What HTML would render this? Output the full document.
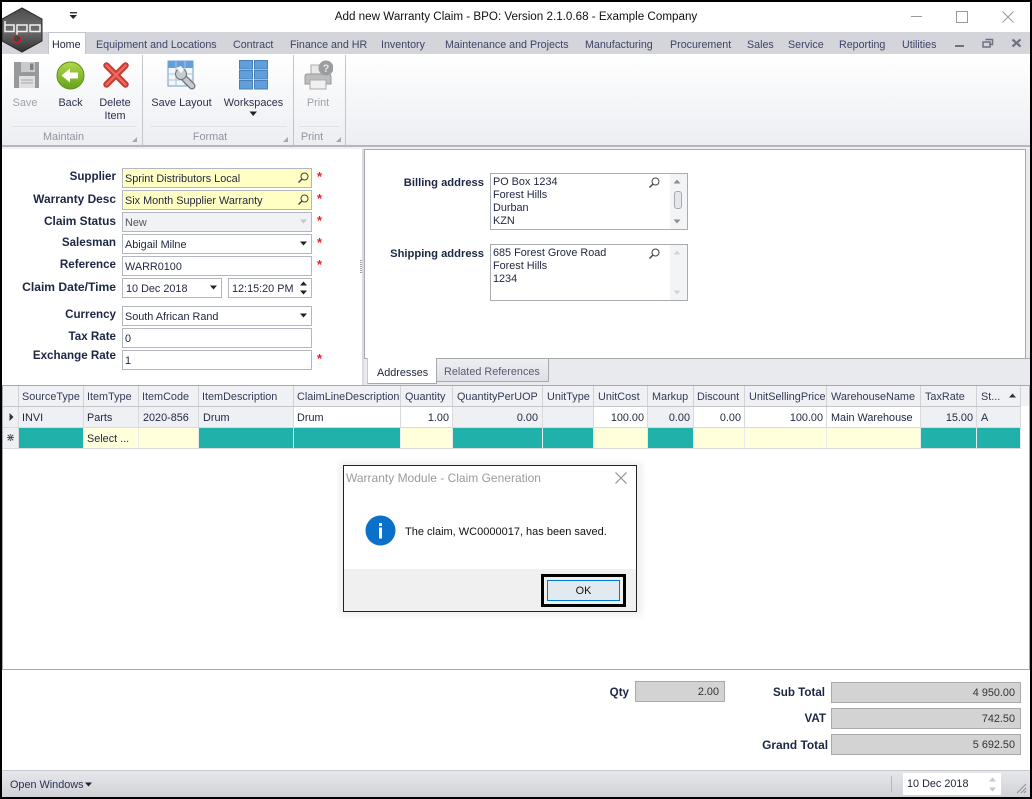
<!DOCTYPE html>
<html><head><meta charset="utf-8"><title>Add new Warranty Claim</title>
<style>
html,body{margin:0;padding:0;background:#fff}
#p{position:relative;width:1032px;height:799px;overflow:hidden;background:#fff;font:10.85px "Liberation Sans",sans-serif;color:#1f2540}
#p div,#p svg{position:absolute}
.t{white-space:nowrap}
.tab{top:38px;height:14px;line-height:14px;color:#3d4468;white-space:nowrap;font-size:10.7px}
.r{color:#2a2f4e;text-align:center;white-space:nowrap;line-height:13px}
.g{color:#9ba0ab}
.gl{color:#8f94a0;text-align:center;white-space:nowrap}
.lb{font-weight:bold;text-align:right;color:#1c2645;white-space:nowrap;font-size:11.6px;line-height:14px}
.f{background:#fff;border:1px solid #b4b7bf;box-sizing:border-box;height:20px;line-height:20px;padding-left:2px;white-space:nowrap;color:#1f2540}
.y{background:#ffffc4}
.s{color:#f01c25;font-weight:bold;font-size:13px;line-height:14px}
.h{top:386px;height:20px;line-height:22px;background:#f0f1f4;border-right:1px solid #d0d2d8;box-sizing:border-box;padding-left:3px;white-space:nowrap;color:#333a58;overflow:hidden}
.c{top:407px;height:20px;line-height:22px;border-right:1px solid #d8dade;box-sizing:border-box;padding:0 3px;white-space:nowrap;background:#eff0f3;color:#1f2540}
.w{background:#fff}
.n{top:428px;height:20px;line-height:22px;border-right:1px solid #e8eaec;box-sizing:border-box;padding:0 3px;white-space:nowrap;background:#20b2aa;color:#1f2540}
.ny{background:#ffffdc}
.ra{text-align:right}
.tot{background:#d3d3d3;border:1px solid #a9a9a9;box-sizing:border-box;height:21px;line-height:20px;text-align:right;padding-right:5px;color:#333}
</style></head><body>
<div id="p">
<!-- title bar -->
<div class="t" style="left:0;top:9px;width:1032px;text-align:center;font-size:11.65px;color:#111;line-height:16px">Add new Warranty Claim - BPO: Version 2.1.0.68 - Example Company</div>
<svg style="left:69px;top:12px" width="9" height="8"><rect x="1" y="0" width="7" height="1.4" fill="#333"/><path d="M0.5 3H8L4.2 7Z" fill="#222"/></svg>
<div style="left:911px;top:16px;width:11px;height:1px;background:#9a9a9a"></div>
<div style="left:956px;top:11px;width:10px;height:10px;border:1px solid #9a9a9a"></div>
<svg style="left:1002px;top:11px" width="12" height="12"><path d="M.5.5L11.5 11.5M11.5.5L.5 11.5" stroke="#9a9a9a" fill="none"/></svg>
<!-- tab strip -->
<div style="left:0;top:32px;width:1032px;height:22px;background:#d3d5db"></div>
<div style="left:48px;top:32px;width:38px;height:23px;background:#fff;border:1px solid #c2c5cc;border-bottom:0;box-sizing:border-box"></div>
<div class="tab" style="left:52px;color:#1f2540">Home</div>
<div class="tab" style="left:96px">Equipment and Locations</div>
<div class="tab" style="left:233px">Contract</div>
<div class="tab" style="left:290px">Finance and HR</div>
<div class="tab" style="left:381px">Inventory</div>
<div class="tab" style="left:445px">Maintenance and Projects</div>
<div class="tab" style="left:585px">Manufacturing</div>
<div class="tab" style="left:670px">Procurement</div>
<div class="tab" style="left:747px">Sales</div>
<div class="tab" style="left:788px">Service</div>
<div class="tab" style="left:839px">Reporting</div>
<div class="tab" style="left:902px">Utilities</div>
<div style="left:955px;top:45px;width:9px;height:2px;background:#6d7180"></div>
<svg style="left:982px;top:38px" width="12" height="10"><path d="M3.5 1.5h7v5h-2M1 4h7v5H1z" fill="none" stroke="#6d7180" stroke-width="1.5"/></svg>
<svg style="left:1011px;top:38px" width="11" height="10"><path d="M1.5 1.5L9.5 8.5M9.5 1.5L1.5 8.5" stroke="#6d7180" stroke-width="2.2" fill="none"/></svg>
<!-- ribbon -->
<div style="left:0;top:54px;width:1032px;height:91px;background:linear-gradient(#fff,#eceef2)"></div>
<div style="left:0;top:145px;width:1032px;height:2px;background:#b5b7bd"></div>
<div style="left:0;top:147px;width:1032px;height:2px;background:#eef0f3"></div>
<div style="left:142px;top:55px;width:1px;height:90px;background:#c3c5cb"></div>
<div style="left:293px;top:55px;width:1px;height:90px;background:#c3c5cb"></div>
<div style="left:345px;top:55px;width:1px;height:90px;background:#c3c5cb"></div>
<div style="left:12px;top:126px;width:124px;height:1px;background:#e0e2e6"></div>
<div style="left:150px;top:126px;width:137px;height:1px;background:#e0e2e6"></div>
<div style="left:299px;top:126px;width:40px;height:1px;background:#e0e2e6"></div>
<!-- logo -->
<svg style="left:1px;top:7px" width="43" height="47" viewBox="0 0 43 47">
<defs><linearGradient id="lg" x1="0" y1="0" x2="0" y2="1"><stop offset="0" stop-color="#4c4c4c"/><stop offset=".5" stop-color="#6e6e6e"/><stop offset="1" stop-color="#333"/></linearGradient></defs>
<path d="M21 1L41 12V34L21 45L1 34V12Z" fill="url(#lg)" stroke="#2a2a2a"/>
<path d="M4 14V24.500H13V18H4M16 28V18H26V24.500H16M29 18H39V24.500H29Z" fill="none" stroke="#f2f2f2" stroke-width="1.500"/>
<circle cx="16" cy="32" r="3.800" fill="#444" stroke="#d8202a" stroke-width="1.200"/>
</svg>
<!-- ribbon icons -->
<svg style="left:13px;top:61px" width="27" height="28" viewBox="0 0 27 28"><path d="M1 1H26V27H1Z" fill="#98999b"/><rect x="8" y="1" width="14" height="10" fill="#c9cacc"/><rect x="17" y="2.500" width="3.500" height="6.500" fill="#808183"/><rect x="6" y="15" width="16" height="12" fill="#dfdfdf"/><path d="M8 19h12M8 22h12" stroke="#a5a5a5"/></svg>
<svg style="left:56px;top:61px" width="29" height="29" viewBox="0 0 29 29"><defs><linearGradient id="gg" x1="0" y1="0" x2="0" y2="1"><stop offset="0" stop-color="#b0d84c"/><stop offset="1" stop-color="#66a01c"/></linearGradient></defs><circle cx="14.500" cy="14.500" r="13.500" fill="url(#gg)" stroke="#5b8f1e"/><path d="M5.500 14.500L14 7.500V11.500H22V17.500H14V21.500Z" fill="#fff"/></svg>
<svg style="left:103px;top:62px" width="26" height="26" viewBox="0 0 26 26"><path d="M3.500 3.500L22.500 22.500M22.500 3.500L3.500 22.500" stroke="#c93a33" stroke-width="6.500" stroke-linecap="round"/><path d="M3.500 3.500L22.500 22.500M22.500 3.500L3.500 22.500" stroke="#ea6a5e" stroke-width="2.500" stroke-linecap="round"/></svg>
<svg style="left:167px;top:60px" width="30" height="30" viewBox="0 0 30 30"><rect x="1" y="1" width="25" height="25" fill="#f3f7fb" stroke="#6f9ccc"/><rect x="1" y="1" width="25" height="7" fill="#63a0da"/><path d="M1 14h25M1 20h25M9 1v25M18 1v25" stroke="#a9c5e2"/><path d="M15 16L25 26" stroke="#6e7277" stroke-width="7" stroke-linecap="round"/><path d="M15 16L25 26" stroke="#c7cbcf" stroke-width="4.500" stroke-linecap="round"/><circle cx="14" cy="14" r="5.500" fill="#c7cbcf" stroke="#6e7277"/><path d="M9 8L14 13L17 10L14 6Z" fill="#f3f7fb"/></svg>
<svg style="left:239px;top:60px" width="29" height="30" viewBox="0 0 29 30"><g fill="#5e9fdc" stroke="#4a7fb5"><rect x=".5" y=".5" width="13" height="8.500"/><rect x="15.500" y=".5" width="13" height="8.500"/><rect x=".5" y="10.500" width="13" height="8.500"/><rect x="15.500" y="10.500" width="13" height="8.500"/><rect x=".5" y="20.500" width="13" height="8.500"/><rect x="15.500" y="20.500" width="13" height="8.500"/></g></svg>
<svg style="left:304px;top:60px" width="29" height="30" viewBox="0 0 29 30"><rect x="7" y="5" width="14" height="10" fill="#e8e8e8" stroke="#aaa"/><path d="M3 14H25Q27 14 27 17V24H1V17Q1 14 3 14Z" fill="#bcbdbf" stroke="#999"/><rect x="6" y="20" width="16" height="9" fill="#f0f0f0" stroke="#aaa"/><circle cx="22" cy="8" r="7.500" fill="#9b9c9e"/><text x="22" y="12" font-family="Liberation Sans" font-size="11" font-weight="bold" fill="#e8e8e8" text-anchor="middle">?</text></svg>
<div class="r g" style="left:5px;top:97px;width:40px">Save</div>
<div class="r" style="left:50px;top:97px;width:41px">Back</div>
<div class="r" style="left:95px;top:97px;width:40px">Delete<br>Item</div>
<div class="r" style="left:145px;top:97px;width:73px">Save Layout</div>
<div class="r" style="left:220px;top:97px;width:67px">Workspaces</div>
<svg style="left:249px;top:111px" width="9" height="6"><path d="M.5.5H8L4.200 5Z" fill="#222"/></svg>
<div class="r g" style="left:298px;top:97px;width:40px">Print</div>
<div class="gl" style="left:30px;top:130px;width:67px;line-height:14px">Maintain</div>
<div class="gl" style="left:175px;top:130px;width:70px;line-height:14px">Format</div>
<div class="gl" style="left:299px;top:130px;width:26px;line-height:14px">Print</div>
<svg style="left:132px;top:137px" width="6" height="6"><path d="M5 0V5H0Z" fill="#a5a8ae"/></svg>
<svg style="left:283px;top:137px" width="6" height="6"><path d="M5 0V5H0Z" fill="#a5a8ae"/></svg>
<svg style="left:336px;top:137px" width="6" height="6"><path d="M5 0V5H0Z" fill="#a5a8ae"/></svg>
<!-- form labels -->
<div class="lb" style="left:0;width:116px;top:170px">Supplier</div>
<div class="lb" style="left:0;width:116px;top:192px;font-size:11.9px">Warranty Desc</div>
<div class="lb" style="left:0;width:116px;top:214px;font-size:11.9px">Claim Status</div>
<div class="lb" style="left:0;width:116px;top:236px">Salesman</div>
<div class="lb" style="left:0;width:116px;top:258px">Reference</div>
<div class="lb" style="left:0;width:116px;top:280px;font-size:12.1px">Claim Date/Time</div>
<div class="lb" style="left:0;width:116px;top:308px">Currency</div>
<div class="lb" style="left:0;width:116px;top:330px">Tax Rate</div>
<div class="lb" style="left:0;width:116px;top:349px">Exchange Rate</div>
<!-- fields -->
<div class="f y" style="left:122px;top:168px;width:190px">Sprint Distributors Local</div>
<div class="f y" style="left:122px;top:190px;width:190px">Six Month Supplier Warranty</div>
<div class="f" style="left:122px;top:212px;width:190px;background:#f1f2f5;color:#555">New</div>
<div class="f" style="left:122px;top:234px;width:190px">Abigail Milne</div>
<div class="f" style="left:122px;top:256px;width:190px">WARR0100</div>
<div class="f" style="left:122px;top:278px;width:100px;padding-left:3px">10 Dec 2018</div>
<div class="f" style="left:228px;top:278px;width:84px;padding-left:3px">12:15:20 PM</div>
<div class="f" style="left:122px;top:306px;width:190px">South African Rand</div>
<div class="f" style="left:122px;top:328px;width:190px">0</div>
<div class="f" style="left:122px;top:350px;width:190px">1</div>
<svg style="left:297px;top:171px" width="13" height="13" viewBox="0 0 13 13"><circle cx="7.500" cy="5.500" r="3.500" fill="none" stroke="#444" stroke-width="1"/><path d="M5 8L1.500 11.500" stroke="#444" stroke-width="1.400"/></svg>
<svg style="left:297px;top:193px" width="13" height="13" viewBox="0 0 13 13"><circle cx="7.500" cy="5.500" r="3.500" fill="none" stroke="#444" stroke-width="1"/><path d="M5 8L1.500 11.500" stroke="#444" stroke-width="1.400"/></svg>
<svg style="left:300px;top:219px" width="8" height="6"><path d="M0 .5H7L3.500 4.500Z" fill="#c5c7cc"/></svg>
<svg style="left:300px;top:241px" width="8" height="6"><path d="M0 .5H7L3.500 4.500Z" fill="#222"/></svg>
<svg style="left:210px;top:285px" width="8" height="6"><path d="M0 .5H7L3.500 4.500Z" fill="#222"/></svg>
<svg style="left:300px;top:280px" width="8" height="16"><path d="M0 5.500H7L3.500 1.500ZM0 10.500H7L3.500 14.500Z" fill="#222"/></svg>
<svg style="left:300px;top:313px" width="8" height="6"><path d="M0 .5H7L3.500 4.500Z" fill="#222"/></svg>
<div class="s" style="left:317px;top:170px">*</div>
<div class="s" style="left:317px;top:192px">*</div>
<div class="s" style="left:317px;top:214px">*</div>
<div class="s" style="left:317px;top:236px">*</div>
<div class="s" style="left:317px;top:258px">*</div>
<div class="s" style="left:317px;top:352px">*</div>
<!-- splitter -->
<div style="left:362px;top:149px;width:2px;height:236px;background:#d9dbe0"></div>
<div style="left:360px;top:260px;width:2px;height:13px;background:repeating-linear-gradient(#9a9da5 0 1px,transparent 1px 2px)"></div>
<!-- right panel -->
<div style="left:364px;top:149px;width:662px;height:210px;border:1px solid #a7a9af;box-sizing:border-box;background:#fff"></div>
<div style="left:364px;top:358px;width:668px;height:27px;background:#e9eaee"></div>
<div style="left:1026px;top:149px;width:4px;height:236px;background:#e9eaee"></div>
<div style="left:364px;top:358px;width:666px;height:1px;background:#a7a9af"></div>
<div style="left:367px;top:358px;width:70px;height:26px;background:#fff;border-right:1px solid #a7a9af;border-bottom:1px solid #a7a9af;border-left:1px solid #c8cad0;box-sizing:border-box"></div>
<div style="left:436px;top:358px;width:113px;height:24px;background:linear-gradient(#eeeff2,#dfe0e5);border:1px solid #a7a9af;box-sizing:border-box"></div>
<div class="t" style="left:377px;top:366px;line-height:14px">Addresses</div>
<div class="t" style="left:444px;top:365px;line-height:14px;color:#555a75">Related References</div>
<div class="lb" style="left:370px;width:114px;top:176px;font-size:11.2px">Billing address</div>
<div class="lb" style="left:370px;width:114px;top:247px;font-size:11.2px">Shipping address</div>
<div style="left:490px;top:173px;width:198px;height:57px;border:1px solid #a9abb2;box-sizing:border-box;background:#fff"></div>
<div style="left:490px;top:244px;width:198px;height:57px;border:1px solid #a9abb2;box-sizing:border-box;background:#fff"></div>
<div style="left:670px;top:174px;width:17px;height:55px;background:#f3f4f6"></div>
<div style="left:670px;top:245px;width:17px;height:55px;background:#f3f4f6"></div>
<div class="t" style="left:493px;top:176px;line-height:13px">PO Box 1234<br>Forest Hills<br>Durban<br>KZN</div>
<div class="t" style="left:493px;top:247px;line-height:13px">685 Forest Grove Road<br>Forest Hills<br>1234</div>
<svg style="left:648px;top:176px" width="13" height="13" viewBox="0 0 13 13"><circle cx="7.500" cy="5.500" r="3.500" fill="none" stroke="#444" stroke-width="1"/><path d="M5 8L1.500 11.500" stroke="#444" stroke-width="1.400"/></svg>
<svg style="left:648px;top:247px" width="13" height="13" viewBox="0 0 13 13"><circle cx="7.500" cy="5.500" r="3.500" fill="none" stroke="#444" stroke-width="1"/><path d="M5 8L1.500 11.500" stroke="#444" stroke-width="1.400"/></svg>
<svg style="left:673px;top:179px" width="9" height="5"><path d="M.5 4.500H7.500L4 .5Z" fill="#8a8d94"/></svg>
<svg style="left:673px;top:219px" width="9" height="5"><path d="M.5 .5H7.500L4 4.500Z" fill="#8a8d94"/></svg>
<div style="left:674px;top:191px;width:6px;height:16px;border:1px solid #a6a9b0;border-radius:3px;background:#e6e7ea"></div>
<svg style="left:673px;top:250px" width="9" height="5"><path d="M.5 4.500H7.500L4 .5Z" fill="#d2d4d8"/></svg>
<svg style="left:673px;top:290px" width="9" height="5"><path d="M.5 .5H7.500L4 4.500Z" fill="#d2d4d8"/></svg>
<!-- grid -->
<div style="left:2px;top:385px;width:1028px;height:285px;border:1px solid #a7a9af;box-sizing:border-box;background:#fff"></div>
<div style="left:3px;top:386px;width:1026px;height:20px;background:#f0f1f4"></div>
<div style="left:3px;top:406px;width:1018px;height:1px;background:#c4c6cc"></div>
<div style="left:3px;top:427px;width:1018px;height:1px;background:#d8dade"></div>
<div style="left:3px;top:448px;width:1018px;height:1px;background:#d8dade"></div>
<div class="h" style="left:3px;width:16px"></div>
<div class="h" style="left:19px;width:65px">SourceType</div>
<div class="h" style="left:84px;width:55px">ItemType</div>
<div class="h" style="left:139px;width:60px">ItemCode</div>
<div class="h" style="left:199px;width:95px">ItemDescription</div>
<div class="h" style="left:294px;width:107px">ClaimLineDescription</div>
<div class="h" style="left:401px;width:52px;padding-left:4px">Quantity</div>
<div class="h" style="left:453px;width:90px;padding-left:4px">QuantityPerUOP</div>
<div class="h" style="left:543px;width:51px;padding-left:4px">UnitType</div>
<div class="h" style="left:594px;width:54px;padding-left:4px">UnitCost</div>
<div class="h" style="left:648px;width:46px;padding-left:4px">Markup</div>
<div class="h" style="left:694px;width:51px;padding-left:3px">Discount</div>
<div class="h" style="left:745px;width:82px;padding-left:4px">UnitSellingPrice</div>
<div class="h" style="left:827px;width:94px;padding-left:4px">WarehouseName</div>
<div class="h" style="left:921px;width:56px;padding-left:4px">TaxRate</div>
<div class="h" style="left:977px;width:44px;padding-left:4px">St...</div>
<svg style="left:1009px;top:393px" width="8" height="5"><path d="M0 4.500H7L3.500 .5Z" fill="#333"/></svg>
<div class="c" style="left:3px;width:16px"></div>
<svg style="left:9px;top:413px" width="5" height="9"><path d="M.5 0V8L4.500 4Z" fill="#333"/></svg>
<div class="c" style="left:19px;width:65px">INVI</div>
<div class="c" style="left:84px;width:55px">Parts</div>
<div class="c" style="left:139px;width:60px;padding-left:4px">2020-856</div>
<div class="c" style="left:199px;width:95px;padding-left:4px">Drum</div>
<div class="c w" style="left:294px;width:107px">Drum</div>
<div class="c w ra" style="left:401px;width:52px">1.00</div>
<div class="c ra" style="left:453px;width:90px;padding-right:4px">0.00</div>
<div class="c" style="left:543px;width:51px"></div>
<div class="c w ra" style="left:594px;width:54px">100.00</div>
<div class="c ra" style="left:648px;width:46px">0.00</div>
<div class="c w ra" style="left:694px;width:51px">0.00</div>
<div class="c w ra" style="left:745px;width:82px">100.00</div>
<div class="c w" style="left:827px;width:94px;padding-left:4px">Main Warehouse</div>
<div class="c ra" style="left:921px;width:56px">15.00</div>
<div class="c" style="left:977px;width:44px;padding-left:4px">A</div>
<div class="c" style="left:3px;width:16px;top:428px;text-align:center;padding:0;line-height:21px;font-size:11px;color:#444">⋇</div>
<div class="n" style="left:19px;width:65px"></div>
<div class="n ny" style="left:84px;width:55px">Select ...</div>
<div class="n ny" style="left:139px;width:60px"></div>
<div class="n" style="left:199px;width:95px"></div>
<div class="n" style="left:294px;width:107px"></div>
<div class="n ny" style="left:401px;width:52px"></div>
<div class="n" style="left:453px;width:90px"></div>
<div class="n" style="left:543px;width:51px"></div>
<div class="n ny" style="left:594px;width:54px"></div>
<div class="n" style="left:648px;width:46px"></div>
<div class="n ny" style="left:694px;width:51px"></div>
<div class="n ny" style="left:745px;width:82px"></div>
<div class="n ny" style="left:827px;width:94px"></div>
<div class="n" style="left:921px;width:56px"></div>
<div class="n" style="left:977px;width:44px"></div>
<!-- totals -->
<div class="lb" style="left:560px;width:69px;top:686px">Qty</div>
<div class="tot" style="left:635px;top:681px;width:90px">2.00</div>
<div class="lb" style="left:720px;width:105px;top:686px">Sub Total</div>
<div class="tot" style="left:831px;top:682px;width:190px">4 950.00</div>
<div class="lb" style="left:720px;width:106px;top:712px">VAT</div>
<div class="tot" style="left:831px;top:708px;width:190px">742.50</div>
<div class="lb" style="left:720px;width:108px;top:738px;font-size:11.9px">Grand Total</div>
<div class="tot" style="left:831px;top:734px;width:190px">5 692.50</div>
<!-- status bar -->
<div style="left:0;top:770px;width:1032px;height:27px;background:linear-gradient(#e6e7ea,#d0d2d7);border-top:1px solid #c6c8cd;box-sizing:border-box"></div>
<div class="t" style="left:10px;top:778px;line-height:14px;color:#2a2f55">Open Windows</div>
<svg style="left:85px;top:782px" width="8" height="5"><path d="M0 .5H7L3.500 4.500Z" fill="#222"/></svg>
<div style="left:891px;top:776px;width:1px;height:16px;background:#b5b7bd"></div>
<div style="left:903px;top:773px;width:98px;height:22px;background:#fff;line-height:22px;padding-left:4px;box-sizing:border-box;white-space:nowrap">10 Dec 2018</div>
<svg style="left:989px;top:777px" width="8" height="15"><path d="M0 4.500H7L3.500 .5ZM0 10.500H7L3.500 14.500Z" fill="#c5c7cc"/></svg>
<svg style="left:1016px;top:783px" width="11" height="11"><path d="M10 1L1 10M10 5L5 10M10 8L8 10" stroke="#8f9198" fill="none"/></svg>
<!-- dialog -->
<div style="left:339px;top:462px;width:303px;height:154px;background:rgba(0,0,0,.06);filter:blur(3px)"></div>
<div style="left:343px;top:465px;width:294px;height:147px;background:#fff;border:1px solid #222;box-sizing:border-box"></div>
<div style="left:344px;top:569px;width:292px;height:42px;background:#f0f0f0"></div>
<div class="t" style="left:346px;top:470px;line-height:16px;font-size:12px;color:#9a9a9a">Warranty Module - Claim Generation</div>
<svg style="left:615px;top:472px" width="12" height="12"><path d="M.5.5L11.500 11.500M11.500.5L.5 11.500" stroke="#8a8a8a" fill="none"/></svg>
<svg style="left:365px;top:515px" width="31" height="31" viewBox="0 0 31 31"><circle cx="15.500" cy="15.500" r="15" fill="#0a70c9"/><rect x="14" y="12.500" width="3" height="11" fill="#fff"/><rect x="14" y="8" width="3" height="3" fill="#fff"/></svg>
<div class="t" style="left:405px;top:525px;line-height:14px;color:#111;font-size:11px">The claim, WC0000017, has been saved.</div>
<div style="left:541px;top:574px;width:85px;height:33px;border:3px solid #000;box-sizing:border-box;background:#f0f0f0"></div>
<div style="left:547px;top:580px;width:73px;height:21px;border:1px solid #0078d7;box-sizing:border-box;background:#e2e9ef;text-align:center;line-height:20px;color:#111">OK</div>
<!-- frame -->
<div style="left:0;top:0;width:1032px;height:2px;background:#000"></div>
<div style="left:0;top:797px;width:1032px;height:2px;background:#000"></div>
<div style="left:0;top:0;width:2px;height:799px;background:#000"></div>
<div style="left:1030px;top:0;width:2px;height:799px;background:#000"></div>
</div>
</body></html>
